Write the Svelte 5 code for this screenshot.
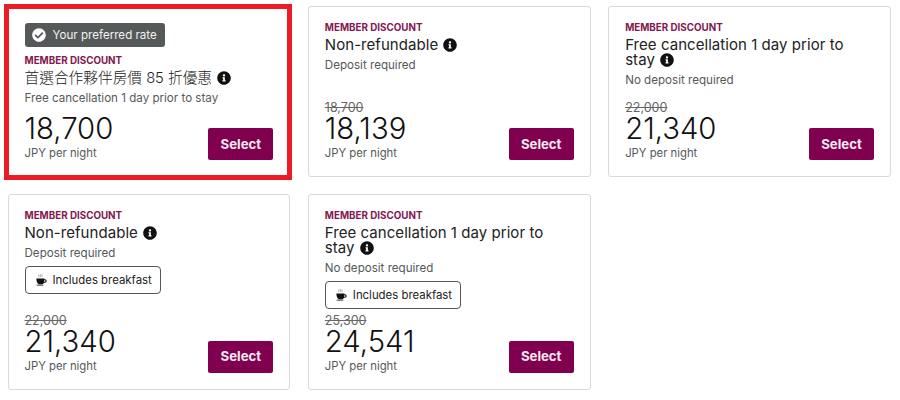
<script>
  const rates = [
    { title: "首選合作夥伴房價 85 折優惠", note: "Free cancellation 1 day prior to stay", price: "18,700", preferred: true },
    { title: "Non-refundable", note: "Deposit required", was: "18,700", price: "18,139" },
    { title: "Free cancellation 1 day prior to stay", note: "No deposit required", was: "22,000", price: "21,340" },
    { title: "Non-refundable", note: "Deposit required", was: "22,000", price: "21,340", breakfast: true },
    { title: "Free cancellation 1 day prior to stay", note: "No deposit required", was: "25,300", price: "24,541", breakfast: true }
  ];
</script>

<div class="rateGrid">
  {#each rates as rate}
    <div class="rateCard">
      {#if rate.preferred}
        <div class="preferred">
          <svg viewBox="0 0 512 512" width="14" height="14" aria-hidden="true"><path fill="#fff" d="M504 256c0 136.967-111.033 248-248 248S8 392.967 8 256 119.033 8 256 8s248 111.033 248 248zM227.314 387.314l184-184c6.248-6.248 6.248-16.379 0-22.627l-22.627-22.627c-6.248-6.249-16.379-6.249-22.628 0L216 308.118l-70.059-70.059c-6.248-6.248-16.379-6.248-22.628 0l-22.627 22.627c-6.248 6.248-6.248 16.379 0 22.627l104 104c6.249 6.249 16.379 6.249 22.628 0z"/></svg>
          <span>Your preferred rate</span>
        </div>
      {/if}
      <div class="eyebrow">MEMBER DISCOUNT</div>
      <div class="title" class:cjk={rate.preferred}>
        {rate.title}
        <svg class="info" viewBox="0 0 512 512" width="14" height="14" aria-hidden="true"><path fill="#111" d="M256 8C119.043 8 8 119.083 8 256c0 136.997 111.043 248 248 248s248-111.003 248-248C504 119.083 392.957 8 256 8zm0 110c23.196 0 42 18.804 42 42s-18.804 42-42 42-42-18.804-42-42 18.804-42 42-42zm56 254c0 6.627-5.373 12-12 12h-88c-6.627 0-12-5.373-12-12v-24c0-6.627 5.373-12 12-12h12v-64h-12c-6.627 0-12-5.373-12-12v-24c0-6.627 5.373-12 12-12h64c6.627 0 12 5.373 12 12v100h12c6.627 0 12 5.373 12 12v24z"/></svg>
      </div>
      <div class="note">{rate.note}</div>
      {#if rate.breakfast}
        <div class="breakfast">
          <svg viewBox="0 0 14 14" width="13" height="13" aria-hidden="true">
            <path fill="#111" d="M1.5 6h8.6v.8h.6a1.9 1.9 0 0 1 0 3.8h-1c-.5.8-1.1 1.3-1.7 1.5H4.2C2.6 11.500 1.500 9.500 1.500 6zm8.400 1.800c0 .6-.1 1.100-.2 1.700h.8a.85.85 0 0 0 0-1.700z"/>
            <path fill="#111" d="M1.800 12.600h7.200v.9H1.800z"/>
            <path fill="none" stroke="#777" stroke-width=".6" d="M4 1.500v3M5.800 1v3.500M7.600 1.500v3"/>
          </svg>
          <span>Includes breakfast</span>
        </div>
      {/if}
      <div class="bottom">
        <div class="prices">
          {#if rate.was}<div class="was">{rate.was}</div>{/if}
          <div class="price">{rate.price}</div>
          <div class="unit">JPY per night</div>
        </div>
        <button class="select">Select</button>
      </div>
      {#if rate.preferred}<div class="highlight"></div>{/if}
    </div>
  {/each}
</div>

<style>
  :global(body) {
    background: #fff;
  }

  .rateGrid {
    display: grid;
    grid-template-columns: repeat(3, 1fr);
    column-gap: 17.5px;
    row-gap: 16.5px;
    padding: 6px 9px 0 7.5px;
    font-family: Inter, "Noto Sans CJK TC", sans-serif;
    color: #111;
  }

  .rateCard {
    position: relative;
    display: flex;
    flex-direction: column;
    align-items: flex-start;
    box-sizing: border-box;
    min-height: 171px;
    padding: 15px 16px 15px;
    border: 1px solid #d9d9d9;
    border-radius: 3px;
  }

  .highlight {
    position: absolute;
    top: -3px;
    left: -5px;
    right: -3px;
    bottom: -4px;
    border: 5.5px solid #ed1c24;
    pointer-events: none;
  }

  .preferred {
    display: flex;
    align-items: center;
    gap: 7px;
    height: 24px;
    padding: 0 8px 0 7px;
    margin: 1px 0 8px;
    background: #55595a;
    border-radius: 3px;
    color: #f0f0f0;
    font-size: 11.6px;
  }

  .eyebrow {
    font-size: 9.8px;
    line-height: 12px;
    font-weight: 700;
    color: #84174f;
  }

  .title {
    margin-top: 3px;
    font-size: 15px;
    line-height: 15px;
    letter-spacing: 0.05px;
    color: #222;
  }

  .title.cjk {
    margin-top: 4px;
    font-size: 14.7px;
    font-weight: 300;
    letter-spacing: 0;
  }

  .info {
    vertical-align: -2px;
    margin-left: 1px;
  }

  .note {
    margin-top: 5px;
    font-size: 11.6px;
    line-height: 16px;
    color: #55595a;
  }

  .cjk + .note {
    margin-top: 4px;
  }

  .breakfast {
    display: flex;
    align-items: center;
    gap: 5px;
    box-sizing: border-box;
    height: 28px;
    padding: 0 8px 0 9px;
    margin-top: 5px;
    border: 1px solid #555;
    border-radius: 4px;
    font-size: 11.4px;
    color: #222;
  }

  .bottom {
    display: flex;
    align-items: flex-end;
    justify-content: space-between;
    align-self: stretch;
    margin-top: auto;
    padding-top: 5px;
  }

  .was {
    font-size: 12.5px;
    line-height: 13px;
    color: #666;
    text-decoration: line-through;
  }

  .price {
    font-size: 29.3px;
    font-weight: 300;
    line-height: 30px;
    color: #111;
  }

  .unit {
    margin-top: 2px;
    font-size: 11.3px;
    line-height: 15px;
    color: #55595a;
  }

  .select {
    width: 65px;
    height: 32px;
    padding: 0 0 1px;
    margin-bottom: 1px;
    border: none;
    border-radius: 2px;
    background: #80004f;
    color: #f3e9ee;
    font-family: inherit;
    font-size: 13.2px;
    font-weight: 700;
  }
</style>
